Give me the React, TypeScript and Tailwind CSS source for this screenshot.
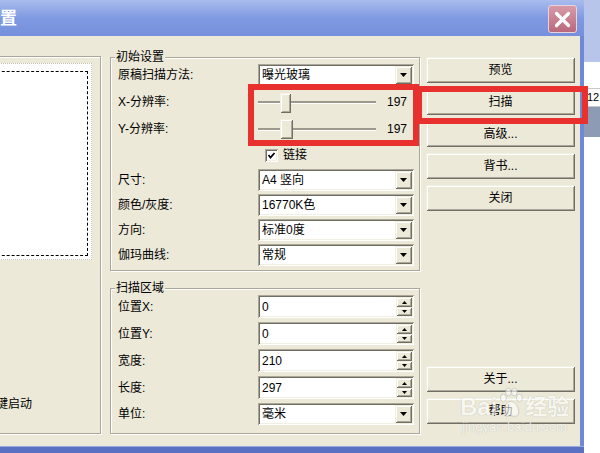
import React from 'react';

const SUNKEN =
  'shadow-[inset_1px_1px_0_#aca899,inset_-1px_-1px_0_#fff,inset_2px_2px_0_#716f64,inset_-2px_-2px_0_#f1efe2]';
const RAISED =
  'shadow-[inset_1px_1px_0_#f1efe2,inset_-1px_-1px_0_#716f64,inset_2px_2px_0_#fff,inset_-2px_-2px_0_#aca899]';
const ETCHED = 'border border-[#aca899] shadow-[inset_1px_1px_0_#fff,1px_1px_0_#fff]';

function Arrow({ w = 7, h = 4 }: { w?: number; h?: number }) {
  return (
    <svg width={w} height={h} viewBox={`0 0 ${w} ${h}`}>
      <polygon points={`0,0 ${w},0 ${w / 2},${h}`} fill="#000" />
    </svg>
  );
}

function Combo({ value }: { value: string }) {
  return (
    <div className={`flex h-[22px] w-[156px] items-center bg-white p-[2px] ${SUNKEN}`}>
      <span className="flex-1 pl-[2px] text-[12px] leading-none">{value}</span>
      <div className={`flex h-[18px] w-[17px] items-center justify-center bg-[#ece9d8] ${RAISED}`}>
        <Arrow />
      </div>
    </div>
  );
}

function Spin({ value }: { value: string }) {
  return (
    <div className={`flex h-[23px] w-[156px] items-center bg-white p-[2px] ${SUNKEN}`}>
      <span className="flex-1 pl-[2px] text-[12px] leading-none">{value}</span>
      <div className="flex h-[19px] w-[16px] flex-col">
        <div className={`flex h-[10px] items-center justify-center bg-[#ece9d8] ${RAISED}`}>
          <svg width="5" height="3" viewBox="0 0 5 3">
            <polygon points="0,3 5,3 2.5,0" fill="#000" />
          </svg>
        </div>
        <div className={`flex h-[9px] items-center justify-center bg-[#ece9d8] ${RAISED}`}>
          <Arrow w={5} h={3} />
        </div>
      </div>
    </div>
  );
}

function Slider({ left, width, top }: { left: number; width: number; top: number }) {
  return (
    <div className="relative flex h-[22px] w-[156px] items-center">
      <div className="h-[2px] w-[118px] bg-[#9d9a8c] shadow-[0_1px_0_#fff]" />
      <div
        className={`absolute h-[20px] bg-[#ece9d8] ${RAISED}`}
        style={{ left, width, top }}
      />
      <span className="ml-auto pr-[7px] text-[12px] leading-none">197</span>
    </div>
  );
}

function Row({ label, children, className = '' }: { label: string; children: React.ReactNode; className?: string }) {
  return (
    <div className={`flex items-center ${className}`}>
      <span className="w-[140px] text-[12px] leading-[14px]">{label}</span>
      {children}
    </div>
  );
}

function Btn({ label, className = '' }: { label: string; className?: string }) {
  return (
    <button className={`h-[26px] w-[149px] bg-[#ece9d8] text-[12px] leading-none text-black ${RAISED} ${className}`}>
      {label}
    </button>
  );
}

export default function App() {
  return (
    <div className="relative flex h-[453px] w-[600px] overflow-hidden bg-white font-['Liberation_Sans','Noto_Sans_CJK_SC',sans-serif] text-black">
      {/* dialog window */}
      <div className="flex h-full w-[584px] shrink-0 flex-col">
        <div className="flex h-[36px] shrink-0 items-start bg-linear-to-b from-[#a9bcee] via-[#7f9ae1] to-[#7690dc]">
          <span className="mt-[9px] text-[17px] font-bold leading-[20px] text-white">置</span>
          <div className="ml-auto mr-[7px] mt-[5px] flex h-[28px] w-[29px] items-center justify-center rounded-[3px] border border-[#e9d4dc] bg-linear-to-b from-[#d79aa8] to-[#b9697d]">
            <svg width="17" height="17" viewBox="0 0 17 17">
              <path d="M2.5 2.5 L14.5 14.5 M14.5 2.5 L2.5 14.5" stroke="#fff" strokeWidth="3.2" strokeLinecap="round" />
            </svg>
          </div>
        </div>

        <div className="flex flex-1 items-start border-r-[4px] border-[#7089d6] bg-[#ece9d8]">
          {/* left preview panel */}
          <div className={`-ml-[10px] mt-[20px] flex h-[378px] w-[111px] shrink-0 flex-col ${ETCHED}`}>
            <div className="mt-[6px] h-[197px] w-[101px] border border-dotted border-[#c4c2b6] bg-white">
              <div className="mr-[3px] mt-[7px] h-[185px] border border-dashed border-black" />
            </div>
            <span className="ml-[5px] mt-[137px] whitespace-nowrap text-[12px] leading-[14px]">键启动</span>
          </div>

          {/* middle settings */}
          <div className="ml-[9px] mt-[21px] flex w-[310px] shrink-0 flex-col">
            <div className={`flex flex-col pb-[4px] pl-[7px] ${ETCHED}`}>
              <span className="-ml-[3px] -mt-[8px] w-fit bg-[#ece9d8] px-[1px] text-[12px] leading-[14px]">初始设置</span>
              <Row label="原稿扫描方法:">
                <Combo value="曝光玻璃" />
              </Row>
              <Row label="X-分辨率:" className="mt-[5px]">
                <Slider left={22} width={11} top={2} />
              </Row>
              <Row label="Y-分辨率:" className="mt-[5px]">
                <Slider left={22} width={13} top={1} />
              </Row>
              <div className="mt-[8px] flex h-[14px] items-center pl-[147px]">
                <div className={`flex h-[13px] w-[13px] items-center justify-center bg-white ${SUNKEN}`}>
                  <svg width="9" height="9" viewBox="0 0 9 9">
                    <polyline points="1.5,4 3.5,6.5 7.5,2" fill="none" stroke="#000" strokeWidth="1.8" />
                  </svg>
                </div>
                <span className="ml-[5px] text-[12px] leading-[14px]">链接</span>
              </div>
              <Row label="尺寸:" className="mt-[7px]">
                <Combo value="A4 竖向" />
              </Row>
              <Row label="颜色/灰度:" className="mt-[3px]">
                <Combo value="16770K色" />
              </Row>
              <Row label="方向:" className="mt-[3px]">
                <Combo value="标准0度" />
              </Row>
              <Row label="伽玛曲线:" className="mt-[3px]">
                <Combo value="常规" />
              </Row>
            </div>

            <div className={`mt-[17px] flex flex-col pb-[8px] pl-[7px] ${ETCHED}`}>
              <span className="-ml-[3px] -mt-[8px] w-fit bg-[#ece9d8] px-[1px] text-[12px] leading-[14px]">扫描区域</span>
              <Row label="位置X:">
                <Spin value="0" />
              </Row>
              <Row label="位置Y:" className="mt-[4px]">
                <Spin value="0" />
              </Row>
              <Row label="宽度:" className="mt-[4px]">
                <Spin value="210" />
              </Row>
              <Row label="长度:" className="mt-[4px]">
                <Spin value="297" />
              </Row>
              <Row label="单位:" className="mt-[4px]">
                <Combo value="毫米" />
              </Row>
            </div>
          </div>

          {/* right buttons */}
          <div className="ml-[6px] mt-[21px] flex flex-col gap-[6px]">
            <Btn label="预览" />
            <Btn label="扫描" />
            <Btn label="高级..." />
            <Btn label="背书..." />
            <Btn label="关闭" />
            <Btn label="关于..." className="mt-[149px]" />
            <Btn label="帮助" />
          </div>
        </div>

        <div className="h-[7px] shrink-0 border-t border-[#9aaae0] bg-[#5a70c2]" />
      </div>

      {/* background window strip */}
      <div className="flex flex-1 flex-col">
        <div className="h-[62px] bg-[#b7c5ea]" />
        <div className="h-[26px] bg-white" />
        <div className="flex h-[19px] items-center border-y border-[#c9c9c9] bg-white pl-[3px] text-[11px] leading-none">12</div>
        <div className="h-[30px] bg-[#8e9bb4]" />
        <div className="flex-1 bg-white" />
      </div>

      {/* red annotation boxes */}
      <div className="pointer-events-none absolute left-[248px] top-[84px] h-[62px] w-[171px] border-[6px] border-[#e8302e]" />
      <div className="pointer-events-none absolute left-[416px] top-[86px] h-[38px] w-[172px] border-[6px] border-[#e8302e]" />

      {/* watermark */}
      <div className="pointer-events-none absolute left-[460px] top-[387px] flex flex-col items-center text-white opacity-60 [text-shadow:0_0_1px_#8a8a8a]">
        <div className="flex items-end">
          <span className="text-[24px] font-bold leading-[24px]">Bai</span>
          <svg width="26" height="32" viewBox="0 0 30 38" className="mx-[1px]">
            <g fill="#fff" stroke="#a0a0a0" strokeWidth="0.8">
              <ellipse cx="6" cy="13" rx="3.5" ry="4.5" />
              <ellipse cx="12" cy="6" rx="3.5" ry="4.5" />
              <ellipse cx="19" cy="6" rx="3.5" ry="4.5" />
              <ellipse cx="25" cy="13" rx="3.5" ry="4.5" />
              <path d="M15 17 C9 17 5 26 6 31 C7 36 12 35 15 34 C18 35 23 36 24 31 C25 26 21 17 15 17 Z" />
            </g>
          </svg>
          <span className="text-[22px] font-bold leading-[24px]">经验</span>
        </div>
        <span className="text-[13px] leading-[15px]">jingyan.baidu.com</span>
      </div>
    </div>
  );
}
